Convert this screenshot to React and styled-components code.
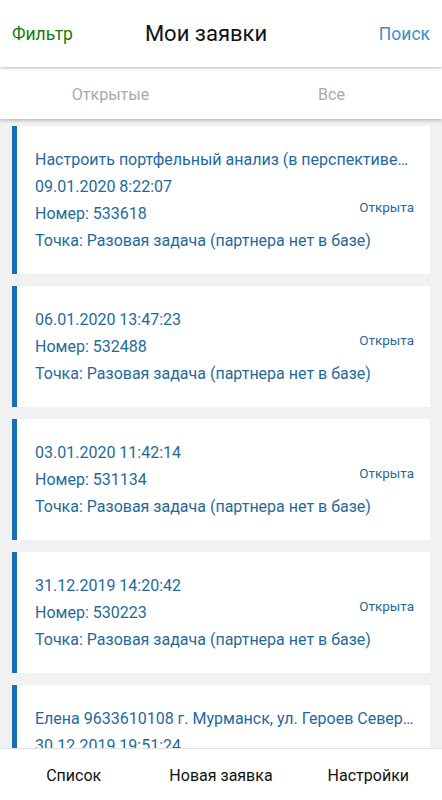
import React from "react";
import styled, { createGlobalStyle } from "styled-components";

const Global = createGlobalStyle`
  html, body { margin: 0; padding: 0; }
  body { font-family: Roboto, "Noto Sans", sans-serif; background: #f1f1f1; }
  * { box-sizing: border-box; }
`;

const Screen = styled.div`
  width: 442px;
  height: 800px;
  display: flex;
  flex-direction: column;
  background: #f1f1f1;
  overflow: hidden;
`;

const Header = styled.header`
  height: 67px;
  flex: none;
  display: flex;
  align-items: center;
  padding: 0 12px;
  background: #fff;
  position: relative;
  z-index: 3;
  box-shadow: 0 1px 3px rgba(0, 0, 0, 0.28);
`;

const HeaderLink = styled.span`
  font-size: 17.5px;
  color: ${(p) => p.$color};
`;

const Title = styled.h1`
  flex: 1;
  margin: 0 0 0 72px;
  font-size: 22px;
  font-weight: 400;
  color: #111;
`;

const Tabs = styled.nav`
  height: 52px;
  flex: none;
  display: grid;
  grid-template-columns: 1fr 1fr;
  background: #fff;
  position: relative;
  z-index: 2;
  box-shadow: 0 2px 3px rgba(0, 0, 0, 0.2);
`;

const Tab = styled.div`
  display: flex;
  align-items: center;
  justify-content: center;
  padding-top: 2px;
  font-size: 16px;
  color: #a9a9a9;
`;

const List = styled.main`
  flex: 1;
  min-height: 0;
  overflow: hidden;
  display: flex;
  flex-direction: column;
  gap: 12px;
  padding: 7px 12px 0;
`;

const Card = styled.article`
  flex: none;
  background: #fff;
  border-left: 5px solid #1a6fae;
  padding: 20px 16px 20px 18px;
  display: flex;
  flex-direction: column;
`;

const Line = styled.div`
  font-size: 16px;
  line-height: 27px;
  color: #1f6a9b;
  white-space: nowrap;
  overflow: hidden;
  text-overflow: ellipsis;
  padding-right: ${(p) => p.$inset || 0}px;
`;

const Body = styled.div`
  display: grid;
  grid-template-columns: 1fr;
`;

const Info = styled.div`
  grid-area: 1 / 1;
  min-width: 0;
  display: flex;
  flex-direction: column;
`;

const Status = styled.span`
  grid-area: 1 / 1;
  justify-self: end;
  align-self: center;
  font-size: 13.5px;
  color: #1f6a9b;
  margin-bottom: 14px;
`;

const BottomBar = styled.footer`
  height: 52px;
  flex: none;
  display: grid;
  grid-template-columns: repeat(3, 1fr);
  background: #fff;
  border-top: 1px solid #e2e2e2;
`;

const BottomItem = styled.div`
  display: flex;
  align-items: center;
  justify-content: center;
  padding-top: 2px;
  font-size: 16px;
  color: #111;
`;

const orders = [
  { title: "Настроить портфельный анализ (в перспективе настроить автоматическую выгрузку)", inset: 5, date: "09.01.2020 8:22:07", num: "533618" },
  { date: "06.01.2020 13:47:23", num: "532488" },
  { date: "03.01.2020 11:42:14", num: "531134" },
  { date: "31.12.2019 14:20:42", num: "530223" },
  { title: "Елена 9633610108 г. Мурманск, ул. Героев Североморцев", inset: 0, date: "30.12.2019 19:51:24", num: "529870" },
];

export default function App() {
  return (
    <Screen>
      <Global />
      <Header>
        <HeaderLink $color="#137a13">Фильтр</HeaderLink>
        <Title>Мои заявки</Title>
        <HeaderLink $color="#3a8fc9">Поиск</HeaderLink>
      </Header>
      <Tabs>
        <Tab>Открытые</Tab>
        <Tab>Все</Tab>
      </Tabs>
      <List>
        {orders.map((o) => (
          <Card key={o.num}>
            {o.title && <Line $inset={o.inset}>{o.title}</Line>}
            <Body>
              <Info>
                <Line>{o.date}</Line>
                <Line>Номер: {o.num}</Line>
                <Line>Точка: Разовая задача (партнера нет в базе)</Line>
              </Info>
              <Status>Открыта</Status>
            </Body>
          </Card>
        ))}
      </List>
      <BottomBar>
        <BottomItem>Список</BottomItem>
        <BottomItem>Новая заявка</BottomItem>
        <BottomItem>Настройки</BottomItem>
      </BottomBar>
    </Screen>
  );
}
